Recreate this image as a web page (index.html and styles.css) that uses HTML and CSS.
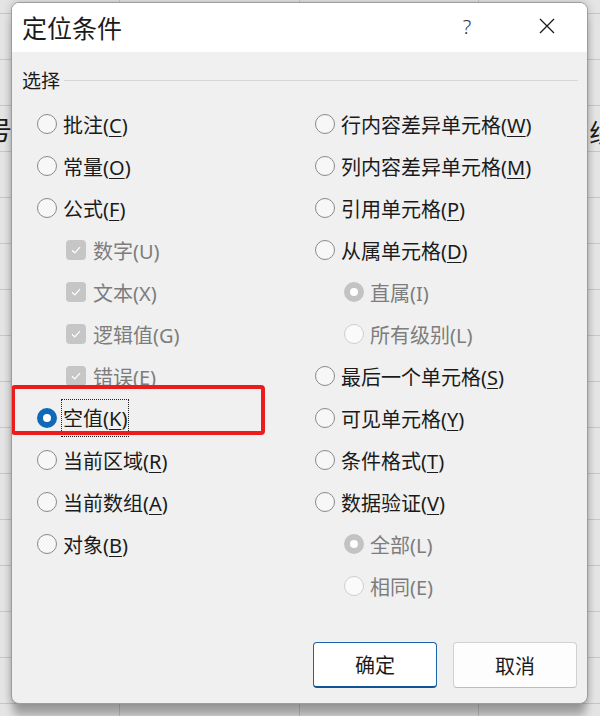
FILE: index.html
```html
<!DOCTYPE html>
<html lang="zh-CN">
<head>
  <meta charset="utf-8">
  <title>定位条件</title>
  <link rel="stylesheet" href="styles.css">
</head>
<body>

<div class="sheet">
  <div class="cell cell--left">编号</div>
  <div class="cell cell--right">线路</div>
</div>

<div class="dialog">
  <div class="titlebar">
    <span class="title">定位条件</span>
    <span class="help">?</span>
    <span class="close">
      <svg width="16" height="16" viewBox="0 0 16 16"><path d="M1 1L15 15M15 1L1 15" stroke="#1b1b1b" stroke-width="1.3" fill="none"/></svg>
    </span>
  </div>

  <div class="body">
    <div class="legend"><span>选择</span><div class="legend__line"></div></div>

    <div class="options">
      <ul class="col">
        <li class="opt"><span class="radio"></span><span>批注(<u>C</u>)</span></li>
        <li class="opt"><span class="radio"></span><span>常量(<u>O</u>)</span></li>
        <li class="opt"><span class="radio"></span><span>公式(<u>F</u>)</span></li>
        <li class="opt opt--sub opt--off"><span class="check"><svg width="12" height="12" viewBox="0 0 12 12"><path d="M2 6.3L4.8 9L10 3.2" stroke="#fff" stroke-width="1.2" fill="none"/></svg></span><span>数字(U)</span></li>
        <li class="opt opt--sub opt--off"><span class="check"><svg width="12" height="12" viewBox="0 0 12 12"><path d="M2 6.3L4.8 9L10 3.2" stroke="#fff" stroke-width="1.2" fill="none"/></svg></span><span>文本(X)</span></li>
        <li class="opt opt--sub opt--off"><span class="check"><svg width="12" height="12" viewBox="0 0 12 12"><path d="M2 6.3L4.8 9L10 3.2" stroke="#fff" stroke-width="1.2" fill="none"/></svg></span><span>逻辑值(G)</span></li>
        <li class="opt opt--sub opt--off"><span class="check"><svg width="12" height="12" viewBox="0 0 12 12"><path d="M2 6.3L4.8 9L10 3.2" stroke="#fff" stroke-width="1.2" fill="none"/></svg></span><span>错误(E)</span></li>
        <li class="opt opt--marked"><span class="radio radio--on"></span><span class="focus">空值(<u>K</u>)</span></li>
        <li class="opt"><span class="radio"></span><span>当前区域(<u>R</u>)</span></li>
        <li class="opt"><span class="radio"></span><span>当前数组(<u>A</u>)</span></li>
        <li class="opt"><span class="radio"></span><span>对象(<u>B</u>)</span></li>
      </ul>
      <ul class="col">
        <li class="opt"><span class="radio"></span><span>行内容差异单元格(<u>W</u>)</span></li>
        <li class="opt"><span class="radio"></span><span>列内容差异单元格(<u>M</u>)</span></li>
        <li class="opt"><span class="radio"></span><span>引用单元格(<u>P</u>)</span></li>
        <li class="opt"><span class="radio"></span><span>从属单元格(<u>D</u>)</span></li>
        <li class="opt opt--sub opt--off"><span class="radio radio--on"></span><span>直属(I)</span></li>
        <li class="opt opt--sub opt--off"><span class="radio"></span><span>所有级别(L)</span></li>
        <li class="opt"><span class="radio"></span><span>最后一个单元格(<u>S</u>)</span></li>
        <li class="opt"><span class="radio"></span><span>可见单元格(<u>Y</u>)</span></li>
        <li class="opt"><span class="radio"></span><span>条件格式(<u>T</u>)</span></li>
        <li class="opt"><span class="radio"></span><span>数据验证(<u>V</u>)</span></li>
        <li class="opt opt--sub opt--off"><span class="radio radio--on"></span><span>全部(L)</span></li>
        <li class="opt opt--sub opt--off"><span class="radio"></span><span>相同(E)</span></li>
      </ul>
    </div>

    <div class="buttons">
      <button class="btn btn--primary">确定</button>
      <button class="btn">取消</button>
    </div>
  </div>
</div>

</body>
</html>
```

FILE: styles.css
```css
body {
  margin: 0;
  width: 600px;
  height: 716px;
  overflow: hidden;
  position: relative;
  font-family: "Noto Sans", "Noto Sans CJK SC", sans-serif;
  color: #1b1b1b;
}

/* spreadsheet behind the dialog */
.sheet {
  height: 716px;
  display: grid;
  grid-template-columns: 120px 180px 179px 1fr;
  grid-template-rows: 14px repeat(16, 46px);
  background-color: #e4e4e4;
  background-image:
    repeating-linear-gradient(to bottom, transparent 0 13px, #c6c6c6 13px 14px, transparent 14px 46px),
    linear-gradient(to right, transparent 119px, #c6c6c6 119px 120px, transparent 120px 299px, #c6c6c6 299px 300px, transparent 300px 478px, #c6c6c6 478px 479px, transparent 479px);
  background-size: 100% 46px, 100% 100%;
}

.cell {
  font-family: "Noto Sans CJK SC", sans-serif;
  font-size: 26px;
  line-height: 46px;
  white-space: nowrap;
  overflow: hidden;
}

.cell--left {
  grid-column: 1;
  grid-row: 4;
  text-indent: -40px;
}

.cell--right {
  grid-column: 4;
  grid-row: 4;
  padding-left: 110px;
  margin-top: 3px;
}

/* dialog */
.dialog {
  position: absolute;
  left: 11px;
  top: 2px;
  width: 577px;
  height: 702px;
  box-sizing: border-box;
  border: 1px solid #9d9d9d;
  border-radius: 8px;
  background: #f0f0f0;
  overflow: hidden;
  box-shadow: 0 14px 8px -2px rgba(0, 0, 0, 0.28), 0 0 8px rgba(0, 0, 0, 0.2);
  display: flex;
  flex-direction: column;
}

.titlebar {
  flex: none;
  height: 49px;
  background: #fff;
  display: flex;
  align-items: center;
  padding-left: 10px;
}

.title {
  font-family: "Noto Sans CJK SC", sans-serif;
  font-size: 25px;
  margin-top: -2px;
}

.help {
  margin-left: auto;
  width: 20px;
  text-align: center;
  font-size: 20px;
  font-weight: 300;
  color: #333;
  margin-top: -2px;
}

.close {
  display: flex;
  margin-left: 62px;
  margin-right: 32px;
  margin-top: -3px;
}

.body {
  flex: 1;
  padding: 16px 9px 0 10px;
  font-size: 20px;
}

.legend {
  display: flex;
  align-items: center;
  height: 24px;
  line-height: 24px;
  font-family: "Noto Sans CJK SC", sans-serif;
  font-size: 19px;
}

.legend__line {
  flex: 1;
  height: 1px;
  background: #d6d6d6;
  margin-left: 4px;
}

.options {
  display: grid;
  grid-template-columns: 278px 1fr;
  margin: 11px 0 0 15px;
}

.col {
  list-style: none;
  margin: 0;
  padding: 0;
}

.opt {
  position: relative;
  height: 42px;
  display: flex;
  align-items: center;
  gap: 6px;
  white-space: nowrap;
}

.opt u {
  text-underline-offset: 3px;
  text-decoration-thickness: 1px;
}

.opt--sub {
  padding-left: 29px;
}

.opt--off {
  color: #7d7d7d;
}

.radio {
  width: 20px;
  height: 20px;
  box-sizing: border-box;
  border-radius: 50%;
  border: 1px solid #8a8a8a;
  background: #f7f7f7;
  flex: none;
}

.radio--on {
  border: 6px solid #0f68b8;
  background: #fff;
}

.opt--off .radio {
  border-color: #cfcfcf;
  background: #fafafa;
}

.opt--off .radio--on {
  border: 6px solid #c3c3c3;
  background: #fff;
}

.check {
  width: 20px;
  height: 20px;
  border-radius: 4px;
  background: #c6c6c6;
  display: flex;
  align-items: center;
  justify-content: center;
  flex: none;
  margin-right: 1px;
}

.focus {
  outline: 1px dotted #222;
  padding: 3px 1px 4px 1px;
  margin-left: -1px;
}

/* red annotation box */
.opt--marked::before {
  content: "";
  position: absolute;
  left: -26px;
  top: -12px;
  width: 254px;
  height: 50px;
  box-sizing: border-box;
  border: 4px solid #ec1c1c;
  border-radius: 4px;
}

.buttons {
  display: flex;
  justify-content: flex-end;
  gap: 16px;
  margin-top: 35px;
  margin-right: 1px;
}

.btn {
  width: 124px;
  height: 46px;
  font-family: "Noto Sans CJK SC", sans-serif;
  font-size: 20px;
  color: #1b1b1b;
  background: #fdfdfd;
  border: 1px solid #d0d0d0;
  border-bottom-color: #bdbdbd;
  border-radius: 4px;
  padding: 0;
}

.btn--primary {
  background: #fff;
  border: 1px solid #1a63a8;
  border-bottom: 2px solid #0f5596;
}
```
